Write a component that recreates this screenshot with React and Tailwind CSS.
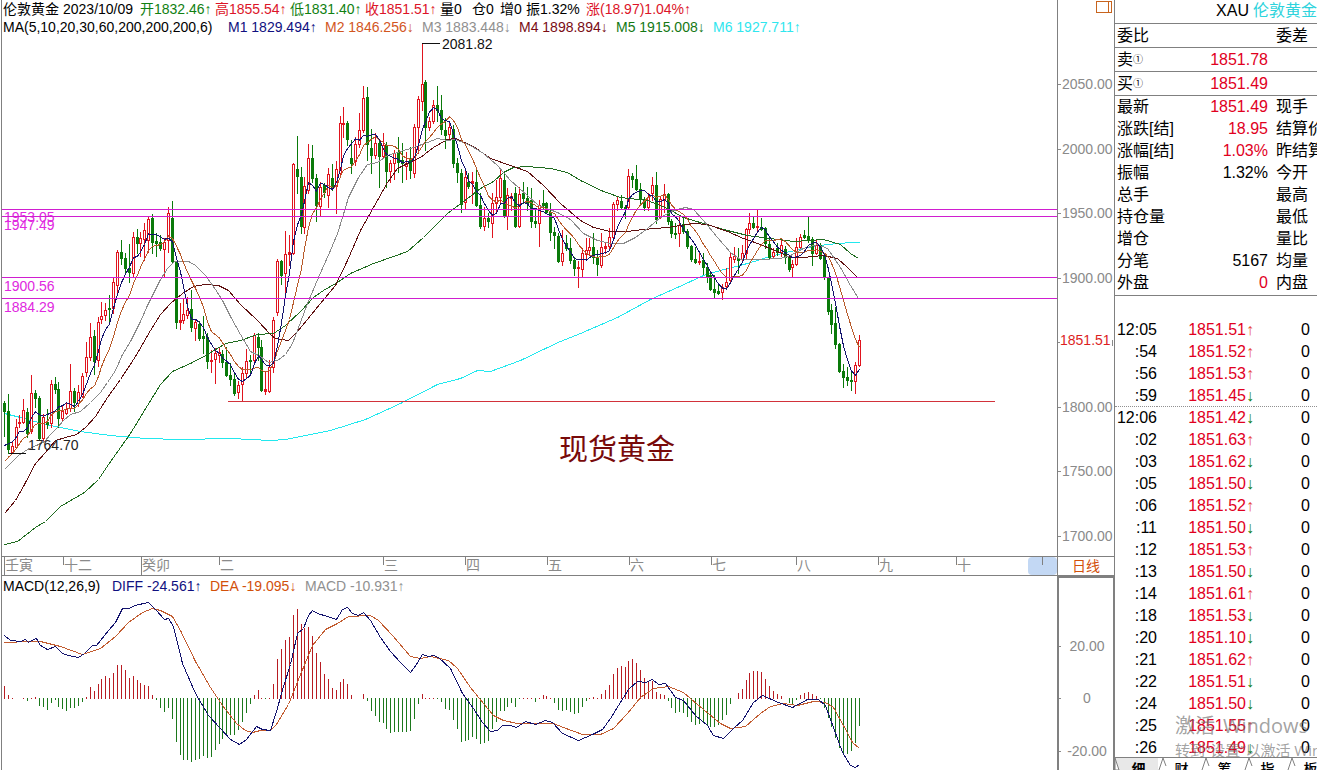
const STEP = 3.904;
const colX = (i) => Math.floor(4.33 + i * STEP);

// up/down flag, then high, body top, body bottom, low (plot rows)
const CANDLES = `
d401,403,411,436 d394,411,449,453 u442,446,452,453 u419,427,447,448 u415,422,423,427 u399,410,422,423
d408,412,433,437 u375,393,431,433 d390,393,398,407 d396,398,438,439 u414,417,438,442 d409,422,424,428
u380,384,423,427 d377,384,389,393 d382,389,418,427 u405,411,418,420 u402,409,413,414 u364,391,408,411
d388,391,402,411 u385,392,403,406 u373,376,396,397 u342,357,372,376 u323,337,357,360 d330,336,361,374
u317,322,360,366 u302,316,319,323 u303,310,315,320 d295,308,309,324 u277,282,308,313 u250,252,285,293
d240,252,258,264 d253,258,268,273 d244,268,272,282 u232,237,273,277 d229,237,243,253 u232,238,243,256
u223,230,239,260 u217,219,240,252 d214,218,242,253 d233,241,243,256 d235,242,248,250 u238,242,249,277
u207,213,240,252 d201,218,261,262 d261,262,322,328 u303,320,322,329 u298,314,320,323 u297,310,315,318
d290,309,327,331 u320,322,328,340 d321,324,338,340 d316,336,338,353 d333,337,361,368 u350,360,361,372
u348,353,359,383 u347,352,355,362 d350,354,362,367 d347,362,375,376 d363,375,379,385 d372,379,393,395
u381,385,392,398 u367,373,384,401 u349,361,373,377 d355,360,361,372 u333,335,360,361 d333,337,347,360
d340,347,390,391 u371,389,391,394 u360,367,391,392 u317,320,367,372 u259,261,312,315 d260,261,275,284
u231,254,273,295 u235,252,254,265 u163,164,253,254 d136,169,176,193 d167,177,226,233 u177,186,227,233
u144,158,190,193 d145,158,178,182 d174,178,205,221 u182,187,206,215 d183,185,192,197 u168,174,195,207
d164,178,187,190 u161,169,186,213 u116,123,173,177 u107,123,124,137 d121,123,139,145 d140,158,163,173
u137,144,161,165 u113,130,144,147 u86,98,130,132 d87,97,144,160 d129,148,155,173 u133,143,155,158
d139,143,156,187 u133,145,156,158 d142,145,171,187 u160,163,171,182 u150,153,163,179 d137,152,162,172
d143,160,163,182 u152,163,166,179 d147,160,170,178 u124,127,173,177 u96,99,127,153 u43,84,101,110
d80,82,127,150 u117,121,127,130 u100,105,121,123 d86,105,110,121 d95,110,129,134 d118,130,135,148
u121,127,134,140 d125,129,163,167 d158,163,172,182 d169,173,204,212 u170,177,202,208 d173,182,186,188
u172,181,183,203 d167,182,205,206 d193,205,226,228 u207,218,226,230 d213,218,221,227 u193,203,223,237
u180,197,203,212 u170,178,197,202 d174,180,216,217 u188,195,216,229 u193,196,198,210 d187,193,226,227
u187,194,226,227 d182,193,198,203 d187,198,203,210 d188,200,221,227 d210,221,223,227 u200,205,223,246
d190,203,205,208 d202,203,212,213 d203,212,232,240 d227,232,235,248 d233,236,261,262 u230,253,261,265
d235,243,248,250 d238,248,260,263 d257,260,268,275 u261,267,268,287 u248,253,269,277 u238,250,254,258
u238,247,250,255 d233,247,257,263 d250,257,264,275 u233,247,265,267 u243,246,248,253 u228,237,246,250
u202,204,237,240 u196,200,204,210 d195,201,207,208 d205,207,208,218 u169,176,207,208 d173,176,179,187
d165,179,189,190 d183,189,199,205 d197,199,207,210 u193,197,207,210 u177,185,193,200 d172,185,219,223
u197,199,217,218 u184,194,199,212 d193,194,221,224 d219,221,233,237 d223,233,234,238 u217,225,233,246
d218,224,231,233 d229,231,246,248 d245,246,259,261 d247,259,262,263 u251,261,262,264 d253,260,267,274
d263,267,277,282 d273,275,289,290 d275,289,292,298 d283,291,293,294 u284,287,292,299 u268,282,286,289
u252,257,280,282 u247,256,259,262 d248,258,260,273 u245,253,259,262 u228,229,253,258 u213,223,229,233
d217,223,227,228 u209,226,227,230 d218,227,229,230 d227,228,243,248 d239,244,257,258 u248,252,256,258
d243,248,252,255 u238,245,252,256 d246,249,257,263 d255,257,269,271 u260,264,267,277 u238,247,264,265
u234,237,247,248 d230,235,237,238 d217,236,239,242 d237,239,253,265 u240,245,253,254 d243,245,258,259
d253,255,277,279 d277,278,311,314 d304,310,324,333 d307,323,344,348 d343,344,371,372 d364,371,377,387
d367,377,380,385 d370,380,381,390 u362,365,381,393 u335,340,365,366`
  .trim()
  .split(/\s+/)
  .map((s) => {
    const [high, top, bottom, low] = s.slice(1).split(",").map(Number);
    return { up: s[0] === "u", high, top, bottom, low };
  });

const MACD_BARS = [
  13, 4, 1, 0, 0, 1, -3, 1, 2, -8, -9, -12, -5, -2, -9, -11, -13, -10, -10, -8, -4, 2, 12, 8, 15, 20, 23, 21, 26, 34,
  34, 29, 21, 23, 19, 16, 14, 13, 4, -2, -10, -14, -10, -21, -44, -57, -62, -62, -64, -62, -61, -58, -60, -59, -52,
  -46, -41, -38, -37, -37, -32, -24, -15, -6, 4, 9, 1, -1, 1, 15, 40, 50, 59, 62, 84, 90, 75, 71, 72, 63, 46, 37, 25,
  20, 11, 9, 17, 20, 15, 4, 0, 0, 5, -3, -13, -18, -24, -25, -31, -35, -34, -34, -34, -34, -33, -21, -6, 5, 1, 1, 1,
  -1, -4, -11, -12, -22, -31, -44, -43, -42, -39, -41, -46, -45, -43, -31, -24, -13, -13, -9, -5, -9, -1, 1, 1, 1, -4,
  1, 4, 3, 1, -5, -12, -13, -12, -14, -16, -15, -9, -3, 1, 2, 1, 5, 9, 14, 25, 31, 33, 32, 38, 40, 36, 29, 21, 18, 18,
  7, 5, 4, -3, -10, -15, -14, -15, -19, -24, -27, -26, -25, -28, -29, -29, -27, -22, -17, -6, 0, 6, 10, 19, 26, 28,
  28, 27, 20, 13, 8, 5, 3, 0, -5, -6, -2, 4, 6, 7, 5, 3, -1, -10, -20, -29, -40, -50, -55, -56, -53, -45, -28,
];

// closes of the sessions before the first visible one
const EARLIER = [492, 484, 477, 470, 462, 458, 455, 452, 449];
const closes = [...EARLIER, ...CANDLES.map((c) => (c.up ? c.top : c.bottom))];

function average(n) {
  return CANDLES.map((_, i) => {
    const end = i + EARLIER.length + 1;
    const sum = closes.slice(end - n, end).reduce((a, b) => a + b, 0);
    return `${colX(i)},${(sum / n).toFixed(1)}`;
  }).join(" ");
}

const MA20 =
  "4,469 10,463 18,455 27,449 36,445 44,441 50,434 57,427 63,420 70,414 80,411 90,402 100,392 107,382 115,370 122,354 130,341 140,321 147,305 153,293 160,279 167,268 174,261 188,261 195,265 205,275 215,289 222,300 230,316 240,334 250,351 260,356 268,362 277,360 285,354 292,343 300,322 307,303 318,277 330,250 337,233 342,217 348,197 358,177 367,164 377,162 387,155 400,151 413,147 427,142 437,138 447,140 455,139 470,145 483,153 497,165 510,180 527,195 538,205 557,212 570,219 583,233 597,240 610,243 623,243 635,237 647,228 660,217 673,210 685,207 693,209 703,220 717,237 730,252 740,259 760,259 780,258 790,255 803,248 817,244 827,248 840,267 850,285 858,298";
const MA30 =
  "4,513 15,500 24,484 35,463 45,452 55,440 65,437 76,434 85,427 95,416 107,397 120,379 135,356 150,330 160,314 170,303 182,293 193,286 204,284 218,285 228,290 240,304 257,320 270,334 275,338 288,340 297,331 302,325 315,309 335,285 347,260 360,230 373,207 387,182 397,168 407,163 420,157 433,147 447,139 455,138 473,146 490,158 510,165 527,171 543,185 560,203 580,220 593,227 610,231 627,231 643,229 667,227 693,223 707,224 727,231 743,238 760,244 777,251 790,257 803,257 823,255 837,258 847,267 858,278";
const MA60 =
  "4,544 17,541 35,527 45,521 60,506 72,499 84,492 98,479 108,464 130,433 147,405 160,384 172,371 190,363 207,354 225,343 240,340 257,334 273,333 285,325 300,311 313,297 323,290 337,282 350,273 373,263 393,256 407,251 423,237 447,213 467,198 480,188 493,181 503,172 513,167 527,166 550,168 567,172 580,180 603,191 620,197 647,200 667,208 683,217 703,223 723,229 747,235 770,238 793,241 823,239 840,244 850,253 858,258";
const MA200 =
  "4,413 20,417 45,424 80,431 110,435 145,438 180,439 230,438 270,440 285,439 300,436 330,430 365,419 400,403 437,384 460,378 477,370 490,371 520,360 545,348 560,341 580,333 617,317 650,299 677,287 703,275 720,270 747,263 773,255 807,247 827,244 850,242 859,242";
const DIFF =
  "4,635 10,640 20,641 25,639 28,642 33,639 36,638 40,645 47,649 55,646 62,653 68,655 78,657 84,653 92,645 96,645 108,630 115,622 122,608 129,608 134,605 148,602 156,610 164,619 168,618 173,626 182,663 195,693 208,715 220,728 230,739 239,744 246,739 256,726 262,729 270,730 276,711 283,686 290,664 297,633 303,628 308,615 312,610 317,613 327,616 336,619 342,609 347,607 352,613 358,615 363,612 370,620 380,637 390,651 400,662 410,672 416,664 422,654 428,656 433,655 438,657 450,668 462,693 473,708 482,722 490,731 497,730 502,725 510,725 516,727 525,721 535,724 545,720 552,722 562,733 578,740 592,734 602,729 610,718 618,705 628,689 637,681 645,682 652,679 658,684 665,683 675,697 683,700 695,715 707,725 713,735 723,738 733,728 742,720 753,702 762,695 778,702 792,707 807,699 818,699 825,705 833,727 842,752 850,765 855,767 859,764";
const DEA =
  "4,642 30,641 40,641 60,646 82,654 100,648 115,636 128,622 142,612 152,608 160,610 172,616 180,630 195,661 210,687 222,705 236,723 245,730 252,732 260,730 270,730 276,724 288,704 300,674 312,645 325,629 337,623 348,616 370,615 378,620 392,635 410,656 420,658 430,656 448,660 457,668 470,687 483,703 493,715 503,720 517,723 553,723 563,727 582,734 600,734 613,728 627,713 640,697 653,688 668,686 683,692 703,709 720,723 730,728 745,726 760,713 770,706 783,703 797,705 813,701 825,702 833,707 843,725 852,742 859,748";

const LEVELS = [
  { y: 209, label: "1953.05", base: 222 },
  { y: 216, label: "1947.49", base: 230 },
  { y: 277, label: "1900.56", base: 291 },
  { y: 298, label: "1884.29", base: 312 },
];

const PRICE_TICKS = [
  [84, "2050.00"],
  [149, "2000.00"],
  [213, "1950.00"],
  [278, "1900.00"],
  [407, "1800.00"],
  [471, "1750.00"],
  [536, "1700.00"],
];

const MONTHS = [
  { name: "壬寅", width: 59, year: true },
  { name: "十二", width: 78 },
  { name: "癸卯", width: 78, year: true },
  { name: "二", width: 164 },
  { name: "三", width: 82 },
  { name: "四", width: 82 },
  { name: "五", width: 82 },
  { name: "六", width: 82 },
  { name: "七", width: 85 },
  { name: "八", width: 82 },
  { name: "九", width: 78 },
  { name: "十", width: 40 },
];

const OHLC = [
  { label: "开", value: "1832.46↑", color: "text-[#118011]" },
  { label: "高", value: "1855.54↑", color: "text-[#dc1428]" },
  { label: "低", value: "1831.40↑", color: "text-[#118011]" },
  { label: "收", value: "1851.51↑", color: "text-[#dc1428]" },
];

const AVERAGES = [
  { text: "M1 1829.494↑", color: "text-[#101080]" },
  { text: "M2 1846.256↓", color: "text-[#d2561e]" },
  { text: "M3 1883.448↓", color: "text-[#909090]" },
  { text: "M4 1898.894↓", color: "text-[#7a0c14]" },
  { text: "M5 1915.008↓", color: "text-[#147814]" },
  { text: "M6 1927.711↑", color: "text-[#30e6ee]" },
];

const RED = "text-[#e1001e]";
const QUOTES = [
  { label: "委比", value: "", next: "委差", line: true },
  { label: "卖", level: "①", value: "1851.78", color: RED, next: "", line: true },
  { label: "买", level: "①", value: "1851.49", color: RED, next: "", line: true },
  { label: "最新", value: "1851.49", color: RED, next: "现手" },
  { label: "涨跌[结]", value: "18.95", color: RED, next: "结算价" },
  { label: "涨幅[结]", value: "1.03%", color: RED, next: "昨结算" },
  { label: "振幅", value: "1.32%", next: "今开" },
  { label: "总手", value: "", next: "最高" },
  { label: "持仓量", value: "", next: "最低" },
  { label: "增仓", value: "", next: "量比" },
  { label: "分笔", value: "5167", next: "均量" },
  { label: "外盘", value: "0", color: RED, next: "内盘" },
];

const TRADES = [
  ["12:05", "1851.51", 1],
  [":54", "1851.52", 1],
  [":56", "1851.53", 1],
  [":59", "1851.45", 0],
  ["12:06", "1851.42", 0],
  [":02", "1851.63", 1],
  [":03", "1851.62", 0],
  [":05", "1851.50", 0],
  [":06", "1851.52", 1],
  [":11", "1851.50", 0],
  [":12", "1851.53", 1],
  [":13", "1851.50", 0],
  [":14", "1851.61", 1],
  [":18", "1851.53", 0],
  [":20", "1851.10", 0],
  [":21", "1851.62", 1],
  [":22", "1851.51", 0],
  [":24", "1851.50", 0],
  [":25", "1851.55", 1],
  [":26", "1851.49", 0],
];

function Line({ points, color }) {
  return <polyline points={points} fill="none" stroke={color} strokeWidth="1" transform="translate(0.5 0.5)" />;
}

function PriceChart() {
  return (
    <svg className="block w-full flex-1" shapeRendering="crispEdges">
      <g transform="translate(-2 -36)">
        <Line points={MA200} color="#22e8ee" />
        {CANDLES.map((c, i) => {
          const x = colX(i);
          const color = c.up ? "#e0141e" : "#0a7a0a";
          const height = Math.max(c.bottom - c.top, 1);
          return (
            <g key={i} fill={color}>
              <rect x={x} y={c.high} width="1" height={c.low - c.high + 1} />
              <rect x={x - 1} y={c.top} width="3" height={height + 1} />
              {c.up && height > 2 && <rect x={x} y={c.top + 1} width="1" height={height - 1} fill="#fff" />}
            </g>
          );
        })}
        <Line points={MA60} color="#1f6b1f" />
        <Line points={MA30} color="#5f1010" />
        <Line points={MA20} color="#8a8a8a" />
        <Line points={average(10)} color="#b85a2a" />
        <Line points={average(5)} color="#14146e" />

        {LEVELS.map((l) => (
          <g key={l.label} fill="#d01ed0">
            <rect x="2" y={l.y} width="100%" height="1" />
            <text x="4" y={l.base} fontSize="14" fill="#e028e0">
              {l.label}
            </text>
          </g>
        ))}
        <rect x="228" y="401" width="767" height="1" fill="#d2323a" />

        <rect x="422" y="43" width="18" height="1" fill="#111" />
        <text x="442" y="49" fontSize="14" fill="#111">
          2081.82
        </text>
        <rect x="9" y="453" width="17" height="1" fill="#111" />
        <text x="28" y="450" fontSize="14" fill="#222">
          1764.70
        </text>
        <text x="559" y="460" fontSize="29" fill="#780a0a">
          现货黄金
        </text>
      </g>
    </svg>
  );
}

function PriceAxis() {
  return (
    <svg className="block h-full w-full" fill="#8a8a8a" fontSize="14" shapeRendering="crispEdges">
      {PRICE_TICKS.map(([y, label]) => (
        <g key={label}>
          <rect x="0" y={y} width="3" height="1" />
          <text x="4" y={y + 5}>
            {label}
          </text>
        </g>
      ))}
      <rect x="0" y="342" width="2" height="1" />
      <rect x="54" y="340" width="1" height="6" />
      <text x="2" y="345" fill="#dc1e1e">
        1851.51
      </text>
    </svg>
  );
}

function MacdChart() {
  return (
    <svg className="block w-full flex-1" shapeRendering="crispEdges">
      <g transform="translate(-2 -596)">
        {MACD_BARS.map((h, i) =>
          h === 0 ? null : (
            <rect
              key={i}
              x={colX(i)}
              y={h > 0 ? 699 - h : 698}
              width="1"
              height={Math.abs(h)}
              fill={h > 0 ? "#b81c22" : "#1c781c"}
            />
          )
        )}
        <Line points={DEA} color="#c25c30" />
        <Line points={DIFF} color="#14146e" />
      </g>
    </svg>
  );
}

function MacdAxis() {
  return (
    <svg className="block h-full w-full" fill="#8a8a8a" fontSize="14" textAnchor="middle" shapeRendering="crispEdges">
      {[
        [68, "20.00"],
        [120, "0"],
        [173, "-20.00"],
      ].map(([y, label]) => (
        <g key={label}>
          <rect x="0" y={y} width="2" height="1" />
          <text x="28" y={y + 5}>
            {label}
          </text>
        </g>
      ))}
    </svg>
  );
}

function TimeAxis() {
  return (
    <div className="flex h-5 overflow-hidden border-y border-[#808080] pl-0.5 text-sm leading-4 text-[#8a8a8a]">
      {MONTHS.map((m) => (
        <div key={m.name} className="flex shrink-0" style={{ width: m.width }}>
          <span className={m.year ? "h-full w-px bg-[#808080]" : "h-2 w-px bg-[#808080]"} />
          <span>{m.name}</span>
        </div>
      ))}
      <button aria-label="scroll" className="ml-auto flex h-full w-[29px] shrink-0 justify-center rounded bg-[#c3d8f4]">
        <span className="h-2 w-px bg-[#808080]" />
      </button>
    </div>
  );
}

function QuotePanel() {
  return (
    <aside className="relative flex w-[203px] shrink-0 flex-col overflow-hidden border-l border-[#808080] text-base leading-[22px] whitespace-nowrap">
      <h1 className="flex h-6 shrink-0 justify-end gap-1 border-b border-[#808080]">
        <span>XAU</span>
        <span className="text-[#2ed3dc]">伦敦黄金</span>
      </h1>
      <table className="w-full table-fixed border-separate border-spacing-0 border-b border-[#808080] pb-px">
        <tbody>
          {QUOTES.map((q) => {
            const cell = q.line ? "h-6 border-b border-[#808080] p-0" : "h-[22px] p-0";
            return (
              <tr key={q.label}>
                <td className={cell}>
                  <span className="pl-0.5">{q.label}</span>
                  {q.level && <span className="align-[2px] text-[10px]">{q.level}</span>}
                </td>
                <td className={`${cell} w-[78px] text-right ${q.color || ""}`}>{q.value}</td>
                <td className={`${cell} w-[49px] overflow-hidden`}>
                  <span className="pl-2">{q.next}</span>
                </td>
              </tr>
            );
          })}
        </tbody>
      </table>

      <div className="min-h-0 flex-1 overflow-hidden pt-[22px]">
        <table className="w-full table-fixed border-separate border-spacing-0">
          <tbody>
            {TRADES.map(([time, price, up], i) => {
              const cell = i === 4 ? "h-[22px] border-t border-dotted border-[#909090] p-0" : "h-[22px] p-0";
              return (
                <tr key={time} className="leading-[21px]">
                  <td className={`${cell} w-[42px] text-right`}>{time}</td>
                  <td className={`${cell} w-[97px] text-right text-[#e1001e]`}>
                    {price}
                    <span className={up ? "text-[#e8503c]" : "text-[#118011]"}>{up ? "↑" : "↓"}</span>
                  </td>
                  <td className={`${cell} pr-[7px] text-right`}>0</td>
                </tr>
              );
            })}
          </tbody>
        </table>
      </div>

      <nav className="flex h-[13px] shrink-0 overflow-hidden border-t border-[#808080] text-sm">
        {["细", "财", "筹", "指", "板"].map((name, i) => (
          <button
            key={name}
            className={`relative h-[22px] w-[43px] shrink-0 pl-1 leading-5 ${i === 0 ? "bg-[#e8e8e8] font-bold" : "font-medium"}`}
          >
            <svg className="absolute top-0 left-0 h-3 w-3" viewBox="0 0 12 12" fill="none" stroke="#808080">
              {i === 0 ? <path d="M0 0 V12 H4 Z" fill="#fff" /> : <path d="M1 12 L5 0 L8 8" fill="#fff" />}
            </svg>
            {name}
          </button>
        ))}
      </nav>

      <div className="pointer-events-none absolute top-[714px] left-[60px] font-['Open_Sans','Noto_Sans_CJK_SC',sans-serif] text-[#6e6e6e]/65">
        <p className="flex gap-2 text-xl leading-6">
          <span>激活</span>
          <span>Windows</span>
        </p>
        <p className="text-[15px] leading-6">转到“设置”以激活 Windows。</p>
      </div>
    </aside>
  );
}

export default function App() {
  return (
    <div className="flex h-screen overflow-hidden bg-white font-['Liberation_Sans','Noto_Sans_CJK_SC',sans-serif] text-black">
      <main className="flex min-w-0 flex-1 flex-col">
        <section className="flex min-h-0 flex-1">
          <div className="ml-px flex min-w-0 flex-1 flex-col overflow-hidden border-l border-[#808080] text-sm leading-[18px] whitespace-nowrap">
            <div className="flex h-[18px] pl-px">
              <span className="w-[60px]">伦敦黄金</span>
              <span className="w-[77px]">2023/10/09</span>
              {OHLC.map((o) => (
                <span key={o.label} className={`w-[75px] ${o.color}`}>
                  {o.label}
                  {o.value}
                </span>
              ))}
              <span className="w-8">量0</span>
              <span className="w-7">仓0</span>
              <span className="w-[26px]">增0</span>
              <span className="w-[60px]">振1.32%</span>
              <span className="text-[#dc1428]">涨(18.97)1.04%↑</span>
            </div>
            <div className="flex h-[18px] pl-px">
              <span className="w-[225px]">MA(5,10,20,30,60,200,200,200,6)</span>
              {AVERAGES.map((a) => (
                <span key={a.text} className={`w-[97px] ${a.color}`}>
                  {a.text}
                </span>
              ))}
            </div>
            <PriceChart />
          </div>
          <div className="relative w-[57px] shrink-0 border-l border-[#808080]">
            <PriceAxis />
            <button aria-label="panel" className="absolute top-px right-[2px] h-3 w-4 border border-[#c8641e]">
              <span className="ml-auto block h-full w-[3px] border-l border-[#c8641e]" />
            </button>
          </div>
        </section>

        <div className="flex shrink-0">
          <div className="ml-px min-w-0 flex-1 border-l border-[#808080]">
            <TimeAxis />
          </div>
          <button className="h-5 w-[57px] shrink-0 border-y border-l border-[#808080] text-sm leading-4 text-[#d2500a]">
            日线
          </button>
        </div>

        <section className="flex h-[194px] shrink-0">
          <div className="ml-px flex min-w-0 flex-1 flex-col overflow-hidden border-l border-[#808080] text-sm whitespace-nowrap">
            <div className="flex h-5 gap-[9px] pl-px">
              <span className="w-[100px]">MACD(12,26,9)</span>
              <span className="w-[89px] text-[#101080]">DIFF -24.561↑</span>
              <span className="w-[86px] text-[#d2500a]">DEA -19.095↓</span>
              <span className="text-[#909090]">MACD -10.931↑</span>
            </div>
            <MacdChart />
          </div>
          <div className="w-[57px] shrink-0 border-t-2 border-r border-l-2 border-[#808080]">
            <MacdAxis />
          </div>
        </section>
      </main>
      <QuotePanel />
    </div>
  );
}
